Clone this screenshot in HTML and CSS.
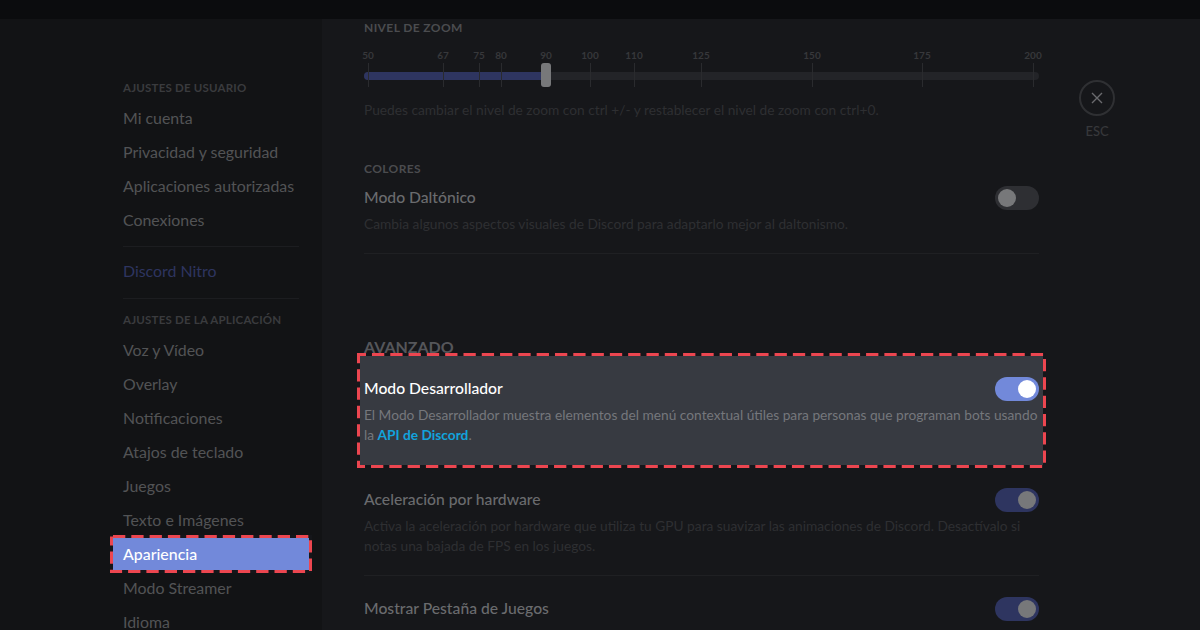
FILE: index.html
```html
<!DOCTYPE html>
<html lang="es">
<head>
<meta charset="utf-8">
<title>Ajustes de Discord</title>
<link rel="stylesheet" href="styles.css">
</head>
<body>
<div class="topbar"></div>
<div class="main">
  <nav class="sidebar">
    <h3 class="side-head">Ajustes de usuario</h3>
    <a class="side-item">Mi cuenta</a>
    <a class="side-item">Privacidad y seguridad</a>
    <a class="side-item">Aplicaciones autorizadas</a>
    <a class="side-item">Conexiones</a>
    <div class="side-sep"></div>
    <a class="side-item nitro">Discord Nitro</a>
    <div class="side-sep second"></div>
    <h3 class="side-head">Ajustes de la aplicación</h3>
    <a class="side-item">Voz y Vídeo</a>
    <a class="side-item">Overlay</a>
    <a class="side-item">Notificaciones</a>
    <a class="side-item">Atajos de teclado</a>
    <a class="side-item">Juegos</a>
    <a class="side-item">Texto e Imágenes</a>
    <a class="side-item active">Apariencia
      <svg class="dash dash-nav" viewBox="0 0 202 38"><rect class="dash-under" x="1.5" y="1.5" width="199" height="35"/><rect class="dash-line nav-line" x="1.5" y="1.5" width="199" height="35"/></svg>
    </a>
    <a class="side-item">Modo Streamer</a>
    <a class="side-item">Idioma</a>
  </nav>
  <section class="content">
    <h5 class="label">Nivel de zoom</h5>
    <div class="slider">
      <div class="track"></div>
      <div class="fill"></div>
      <span class="tick" style="left:4px"><b>50</b></span>
      <span class="tick" style="left:79px"><b>67</b></span>
      <span class="tick" style="left:115px"><b>75</b></span>
      <span class="tick" style="left:137px"><b>80</b></span>
      <span class="tick" style="left:182px"><b>90</b></span>
      <span class="tick" style="left:226px"><b>100</b></span>
      <span class="tick" style="left:270px"><b>110</b></span>
      <span class="tick" style="left:337px"><b>125</b></span>
      <span class="tick" style="left:448px"><b>150</b></span>
      <span class="tick" style="left:558px"><b>175</b></span>
      <span class="tick" style="left:669px"><b>200</b></span>
      <div class="grabber"></div>
    </div>
    <p class="desc zoom-desc">Puedes cambiar el nivel de zoom con ctrl +/- y restablecer el nivel de zoom con ctrl+0.</p>

    <h5 class="label colors">Colores</h5>
    <div class="row">
      <span class="title">Modo Daltónico</span>
      <span class="toggle off"><i></i></span>
    </div>
    <p class="desc">Cambia algunos aspectos visuales de Discord para adaptarlo mejor al daltonismo.</p>
    <div class="sep"></div>

    <h2 class="section">Avanzado</h2>
    <div class="highlight">
      <div class="row">
        <span class="title bright">Modo Desarrollador</span>
        <span class="toggle on"><i></i></span>
      </div>
      <p class="desc lit">El Modo Desarrollador muestra elementos del menú contextual útiles para personas que programan bots usando la <a class="link">API de Discord</a>.</p>
      <svg class="dash dash-box" viewBox="0 0 689 115"><rect class="dash-under" x="1.5" y="1.5" width="686" height="112"/><rect class="dash-line box-line" x="1.5" y="1.5" width="686" height="112"/></svg>
    </div>

    <div class="row hw">
      <span class="title">Aceleración por hardware</span>
      <span class="toggle dim"><i></i></span>
    </div>
    <p class="desc">Activa la aceleración por hardware que utiliza tu GPU para suavizar las animaciones de Discord. Desactívalo si notas una bajada de FPS en los juegos.</p>
    <div class="sep"></div>
    <div class="row games">
      <span class="title">Mostrar Pestaña de Juegos</span>
      <span class="toggle dim"><i></i></span>
    </div>
  </section>
  <aside class="esc">
    <span class="esc-btn">
      <svg viewBox="0 0 14 14" width="14" height="14"><path d="M2 2l10 10M12 2L2 12" fill="none" stroke="#6a6b6e" stroke-width="1.4"/></svg>
    </span>
    <span class="esc-text">ESC</span>
  </aside>
</div>
</body>
</html>
```
FILE: styles.css
```css
* { box-sizing: border-box; }
html, body { margin: 0; height: 630px; overflow: hidden; }
body {
  background: #16171a;
  font-family: Lato, "Open Sans", sans-serif;
  color: #6a6b6e;
}
.topbar { height: 19px; background: #0b0c0e; }
.main { display: flex; height: 611px; overflow: hidden; }

.sidebar {
  width: 322px;
  flex: none;
  background: #121315;
  padding: 60px 13px 0 113px;
}
.side-head {
  margin: 0 0 4px 10px;
  height: 18px;
  line-height: 18px;
  font-size: 11.5px;
  font-weight: 700;
  letter-spacing: .2px;
  text-transform: uppercase;
  color: #3a3b3e;
}
.side-item {
  display: block;
  position: relative;
  height: 34px;
  line-height: 33px;
  padding-left: 10px;
  width: 196px;
  font-size: 15.9px;
  color: #525355;
}
.side-item.nitro { color: #2e3560; }
.side-item.active {
  background: #7289da;
  color: #fff;
  font-weight: 500;
}
.side-sep {
  margin: 9px 0 7px 10px;
  width: 176px;
  height: 1px;
  background: #1c1d20;
}
.side-sep.second { margin: 10px 0 12px 10px; }
.dash {
  position: absolute;
  pointer-events: none;
}
.dash-nav { left: -3px; top: -2px; width: 202px; height: 38px; }
.dash-box { left: -1px; top: -1px; width: 689px; height: 115px; }
.dash-under { fill: none; stroke: #15161a; stroke-width: 3; }
.dash-line { fill: none; stroke: #ec4650; stroke-width: 3; stroke-dasharray: 12.3 6; }
.nav-line { stroke-dashoffset: -1.5; }
.box-line { stroke-dashoffset: 4.83; }

.content {
  width: 717px;
  flex: none;
  padding-left: 42px;
}
.label {
  margin: 0;
  height: 18px;
  line-height: 18px;
  font-size: 12px;
  font-weight: 700;
  letter-spacing: .4px;
  text-transform: uppercase;
  color: #4b4c4f;
}
.slider { position: relative; height: 52px; margin-top: 9px; }
.track {
  position: absolute;
  left: 0; right: 0; top: 26px;
  height: 8px;
  border-radius: 4px;
  background: #232428;
}
.fill {
  position: absolute;
  left: 0; top: 26px;
  width: 182px;
  height: 8px;
  border-radius: 4px 0 0 4px;
  background: #2e3560;
}
.tick {
  position: absolute;
  top: 17px;
  width: 1px;
  height: 24px;
  background: #2a2b2e;
}
.tick b {
  position: absolute;
  bottom: 26px;
  left: -15px;
  width: 30px;
  text-align: center;
  font-size: 10px;
  font-weight: 700;
  color: #37383b;
}
.grabber {
  position: absolute;
  left: 177px; top: 17px;
  width: 10px;
  height: 24px;
  border-radius: 3px;
  background: #77787a;
}
.desc {
  margin: 0;
  font-size: 13.73px;
  line-height: 20px;
  color: #2e2f32;
}
.zoom-desc { margin-top: 2px; }
.colors { margin-top: 40px; }
.row {
  display: flex;
  align-items: center;
  justify-content: space-between;
  height: 24px;
}
.row + .desc { margin-top: 4px; }
.colors + .row { margin-top: 8px; }
.title { font-size: 15.7px; font-weight: 500; color: #6a6b6e; margin-bottom: 3px; }
.title.bright { color: #fff; }
.toggle {
  display: flex;
  align-items: center;
  width: 44px;
  height: 24px;
  padding: 0 3px;
  border-radius: 12px;
}
.toggle i {
  display: block;
  width: 18px;
  height: 18px;
  border-radius: 50%;
}
.toggle.off { background: #2e2f33; }
.toggle.off i { background: #77787a; }
.toggle.on { background: #7289da; justify-content: flex-end; }
.toggle.on i { background: #fff; }
.toggle.dim { background: #2e3560; justify-content: flex-end; }
.toggle.dim i { background: #77787a; }
.sep { height: 1px; background: #1f2023; margin-top: 19px; }
.section {
  margin: 83px 0 0;
  height: 20px;
  line-height: 20px;
  font-size: 16px;
  font-weight: 700;
  text-transform: uppercase;
  color: #55565a;
}
.highlight {
  position: relative;
  margin: -3px -6px 0;
  padding: 23px 6px 0;
  height: 114px;
  background: #373a41;
}
.desc.lit { color: #75777c; margin-right: -6px; }
.link { color: #12a3dc; font-weight: 700; }
.hw { margin-top: 20px; }
.games { margin-top: 21px; }

.esc {
  flex: none;
  width: 36px;
  margin-left: 40px;
  padding-top: 61px;
  display: flex;
  flex-direction: column;
  align-items: center;
}
.esc-btn {
  display: flex;
  align-items: center;
  justify-content: center;
  width: 36px;
  height: 36px;
  flex: none;
  border: 2px solid #2f3033;
  border-radius: 50%;
}
.esc-text {
  margin-top: 7px;
  font-size: 13px;
  font-weight: 500;
  color: #37383b;
}
```
